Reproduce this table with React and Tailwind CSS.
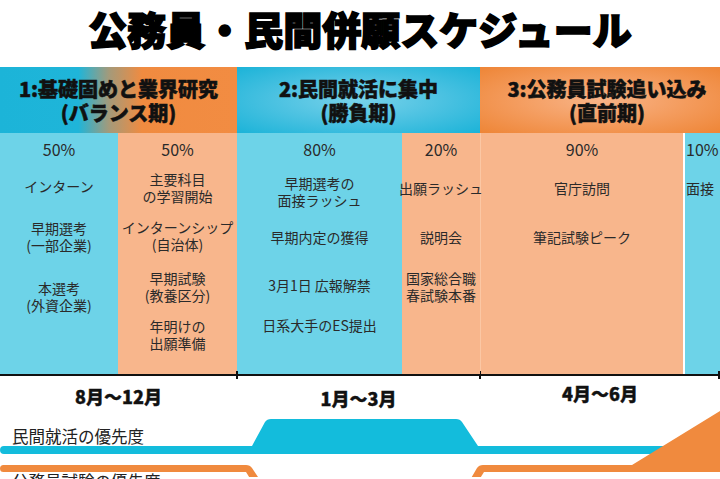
import React from "react";

const Item = ({ mt, lines }) => (
  <div className={`${mt} text-center whitespace-nowrap`}>
    {lines.map((l, i) => (
      <div key={i}>{l}</div>
    ))}
  </div>
);

const Pct = ({ children }) => (
  <div className="pt-[8px] text-[16px] leading-[16px] whitespace-nowrap">{children}</div>
);

export default function App() {
  return (
    <div className="w-[720px] h-[479px] overflow-hidden bg-white text-[#2a2a2a] font-['Noto_Sans_CJK_JP','Noto_Sans',sans-serif]">
      {/* Title */}
      <div className="h-[67px] pt-[7px] flex justify-center">
        <h1 className="text-[39px] leading-[42px] font-black text-black [-webkit-text-stroke:1.6px_#000] whitespace-nowrap">
          公務員・民間併願スケジュール
        </h1>
      </div>

      {/* Phase header */}
      <div className="flex h-[66px] text-[20px] leading-[24px] font-black text-[#111] [-webkit-text-stroke:0.5px_#111]">
        <div className="w-[237px] pt-[2px] flex flex-col items-center justify-center bg-[linear-gradient(to_right,#1cb4d8_0%,#1fb5d9_33%,#a49a7a_46%,#f08b40_60%,#f28c42_100%)]">
          <div className="whitespace-nowrap">1:基礎固めと業界研究</div>
          <div className="whitespace-nowrap">(バランス期)</div>
        </div>
        <div className="w-[243px] pt-[2px] flex flex-col items-center justify-center bg-[radial-gradient(ellipse_at_center,#78d2ea_0%,#4fc3e2_45%,#1bb3d8_100%)]">
          <div className="whitespace-nowrap">2:民間就活に集中</div>
          <div className="whitespace-nowrap">(勝負期)</div>
        </div>
        <div className="w-[240px] pt-[2px] pl-[14px] flex flex-col items-center justify-center bg-[radial-gradient(ellipse_at_center,#f8b488_0%,#f49c5e_50%,#ee8536_100%)]">
          <div className="whitespace-nowrap">3:公務員試験追い込み</div>
          <div className="whitespace-nowrap">(直前期)</div>
        </div>
      </div>

      {/* Content columns */}
      <div className="flex h-[241px] text-[14px] leading-[17px] overflow-hidden">
        <div className="w-[118px] bg-[#6dd3e8] flex flex-col items-center">
          <Pct>50%</Pct>
          <Item mt="mt-[21px]" lines={["インターン"]} />
          <Item mt="mt-[25px]" lines={["早期選考", "(一部企業)"]} />
          <Item mt="mt-[26px]" lines={["本選考", "(外資企業)"]} />
        </div>
        <div className="w-[119px] bg-[#f8b68c] flex flex-col items-center">
          <Pct>50%</Pct>
          <Item mt="mt-[14px]" lines={["主要科目", "の学習開始"]} />
          <Item mt="mt-[14px]" lines={["インターンシップ", "(自治体)"]} />
          <Item mt="mt-[17px]" lines={["早期試験", "(教養区分)"]} />
          <Item mt="mt-[14px]" lines={["年明けの", "出願準備"]} />
        </div>
        <div className="w-[165px] bg-[#6dd3e8] flex flex-col items-center">
          <Pct>80%</Pct>
          <Item mt="mt-[18px]" lines={["早期選考の", "面接ラッシュ"]} />
          <Item mt="mt-[20px]" lines={["早期内定の獲得"]} />
          <Item mt="mt-[31px]" lines={["3月1日 広報解禁"]} />
          <Item mt="mt-[23px]" lines={["日系大手のES提出"]} />
        </div>
        <div className="w-[78px] bg-[#f8b68c] flex flex-col items-center relative z-10">
          <Pct>20%</Pct>
          <Item mt="mt-[23px]" lines={["出願ラッシュ"]} />
          <Item mt="mt-[32px]" lines={["説明会"]} />
          <Item mt="mt-[24px]" lines={["国家総合職", "春試験本番"]} />
        </div>
        <div className="w-[203px] bg-[#f8b68c] border-l border-[#fbc7a4] flex flex-col items-center">
          <Pct>90%</Pct>
          <Item mt="mt-[23px]" lines={["官庁訪問"]} />
          <Item mt="mt-[32px]" lines={["筆記試験ピーク"]} />
        </div>
        <div className="w-[37px] bg-[#6dd3e8] border-l-2 border-white flex flex-col items-start pl-[1px]">
          <Pct>10%</Pct>
          <Item mt="mt-[23px]" lines={["面接"]} />
        </div>
      </div>

      {/* Time axis */}
      <div className="relative h-[2px] bg-[#111]">
        <div className="absolute left-[236px] top-[-3px] w-[2px] h-[8px] bg-[#111]" />
        <div className="absolute left-[479px] top-[-3px] w-[2px] h-[8px] bg-[#111]" />
        <div className="absolute left-[718px] top-[-3px] w-[2px] h-[8px] bg-[#111]" />
      </div>

      {/* Month labels */}
      <div className="flex h-[32px] text-[18px] leading-[20px] font-black text-[#111] [-webkit-text-stroke:0.4px_#111]">
        <div className="w-[237px] pt-[10px] text-center">8月～12月</div>
        <div className="w-[243px] pt-[12px] text-center">1月～3月</div>
        <div className="w-[240px] pt-[7px] text-center">4月～6月</div>
      </div>

      {/* Priority chart */}
      <div className="relative h-[69px]">
        <svg className="absolute inset-0" width="720" height="69" viewBox="0 0 720 69">
          <path
            d="M4,38 L252,38 L265,14 Q267,11 271,11 L456,11 Q460,11 462,14 L478,38 L700,38 L700,46 L4,46 A4,4 0 0 1 4,38 Z"
            fill="#13bcdc"
          />
          <path
            d="M3.5,57 L246,57 Q250,57 252,60 L260,72 L251,72 L246,64 L3.5,64 A3.5,3.5 0 0 1 3.5,57 Z"
            fill="#f08a3e"
          />
          <path
            d="M470,72 L477,60 Q479,57 483,57 L632,57 L720,3 L720,64 L484,64 L479,72 Z"
            fill="#f08a3e"
          />
        </svg>
        <div className="relative pl-[12px] pt-[18px] text-[16.5px] leading-[20px] text-[#222]">
          <div>民間就活の優先度</div>
          <div className="mt-[25px]">公務員試験の優先度</div>
        </div>
      </div>
    </div>
  );
}
